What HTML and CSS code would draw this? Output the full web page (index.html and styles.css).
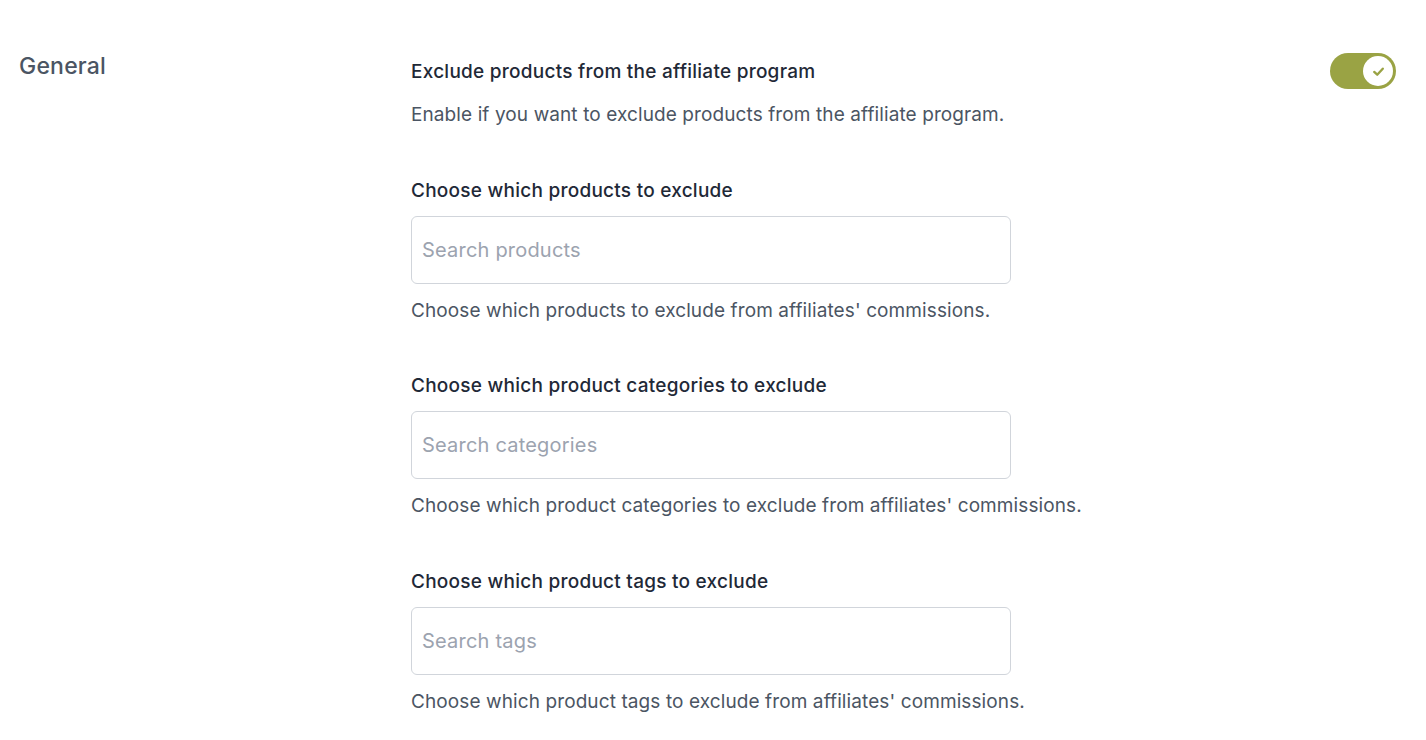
FILE: index.html
```html
<!DOCTYPE html>
<html lang="en">
<head>
<meta charset="utf-8">
<title>General settings</title>
<link rel="stylesheet" href="styles.css">
</head>
<body>
<main class="settings">
  <h2 class="section-title">General</h2>
  <div class="fields">
    <div class="field field-toggle">
      <div class="field-text">
        <div class="label">Exclude products from the affiliate program</div>
        <p class="help first-help">Enable if you want to exclude products from the affiliate program.</p>
      </div>
      <button class="toggle" type="button" aria-pressed="true">
        <span class="knob">
          <svg width="15" height="15" viewBox="0 0 14 14" fill="none"><path d="M3 7.4 L5.8 10 L11 4.4" stroke="#9aa344" stroke-width="2.2" stroke-linecap="round" stroke-linejoin="round"/></svg>
        </span>
      </button>
    </div>
    <div class="field">
      <label class="label" for="p">Choose which products to exclude</label>
      <input id="p" class="search" type="text" placeholder="Search products">
      <p class="help">Choose which products to exclude from affiliates' commissions.</p>
    </div>
    <div class="field">
      <label class="label" for="c">Choose which product categories to exclude</label>
      <input id="c" class="search" type="text" placeholder="Search categories">
      <p class="help">Choose which product categories to exclude from affiliates' commissions.</p>
    </div>
    <div class="field">
      <label class="label" for="t">Choose which product tags to exclude</label>
      <input id="t" class="search" type="text" placeholder="Search tags">
      <p class="help">Choose which product tags to exclude from affiliates' commissions.</p>
    </div>
  </div>
</main>
</body>
</html>
```

FILE: styles.css
```css
* { box-sizing: border-box; }
html, body { margin: 0; background: #fff; }
body {
  font-family: Inter, "Noto Sans", "Liberation Sans", sans-serif;
  color: #1f2937;
}
.settings {
  display: grid;
  grid-template-columns: 392px 1fr;
  padding: 52px 30px 0 19px;
}
.section-title {
  margin: 0;
  font-size: 23px;
  line-height: 28px;
  font-weight: 500;
  letter-spacing: 0.2px;
  color: #4b5563;
}
.fields {
  display: flex;
  flex-direction: column;
  gap: 51.5px;
  padding-top: 8px;
}
.field {
  display: flex;
  flex-direction: column;
  align-items: flex-start;
}
.field-toggle {
  flex-direction: row;
  justify-content: space-between;
  align-items: flex-start;
}
.label {
  display: block;
  font-size: 19px;
  line-height: 24px;
  font-weight: 500;
  letter-spacing: 0.25px;
  color: #1f2937;
}
.help {
  margin: 15px 0 0;
  font-size: 19px;
  line-height: 24px;
  letter-spacing: 0.1px;
  color: #4b5563;
}
.first-help { margin-top: 19px; }
.search {
  margin-top: 13px;
  width: 600px;
  height: 68px;
  border: 1px solid #d1d5db;
  border-radius: 6px;
  padding: 0 10px;
  font-family: inherit;
  font-size: 20px;
  letter-spacing: 0.2px;
  color: #1f2937;
  background: #fff;
  outline: none;
}
.search::placeholder { color: #9ca3af; }
.toggle {
  margin-top: -7px;
  width: 66px;
  height: 36px;
  border: none;
  border-radius: 18px;
  background: #9aa344;
  padding: 3px;
  display: flex;
  justify-content: flex-end;
  cursor: pointer;
}
.knob {
  width: 30px;
  height: 30px;
  border-radius: 50%;
  background: #fff;
  display: flex;
  align-items: center;
  justify-content: center;
}
```
